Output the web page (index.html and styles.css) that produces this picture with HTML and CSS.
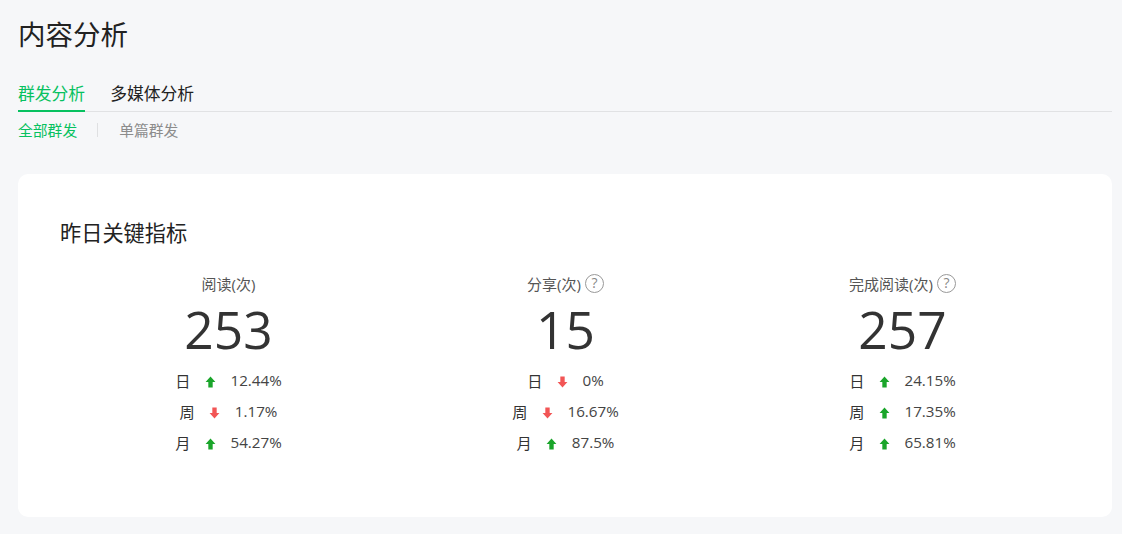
FILE: index.html
```html
<!DOCTYPE html>
<html lang="zh-CN">
<head>
    <meta charset="UTF-8">
    <title>内容分析</title>
    <link rel="stylesheet" href="styles.css">
</head>
<body>
    <svg class="defs" width="0" height="0">
        <symbol id="up" viewBox="0 0 10 11"><path d="M5 0.5 L9.5 5.5 H7 V10.5 H3 V5.5 H0.5 Z"/></symbol>
        <symbol id="down" viewBox="0 0 10 11"><path d="M5 10.5 L9.5 5.5 H7 V0.5 H3 V5.5 H0.5 Z"/></symbol>
    </svg>
    <div class="container">
        <h1 class="title">内容分析</h1>
        <div class="tabs">
            <a class="tab on">群发分析</a>
            <a class="tab">多媒体分析</a>
        </div>
        <div class="subtabs">
            <a class="subtab on">全部群发</a>
            <span class="sep"></span>
            <a class="subtab">单篇群发</a>
        </div>
        <div class="card">
            <h2 class="card-title">昨日关键指标</h2>
            <div class="stats">
                <div class="stat">
                    <div class="stat-name">阅读(次)</div>
                    <div class="stat-num">253</div>
                    <div class="row"><span class="label">日</span><svg class="arrow up"><use href="#up"/></svg><span>12.44%</span></div>
                    <div class="row"><span class="label">周</span><svg class="arrow down"><use href="#down"/></svg><span>1.17%</span></div>
                    <div class="row"><span class="label">月</span><svg class="arrow up"><use href="#up"/></svg><span>54.27%</span></div>
                </div>
                <div class="stat">
                    <div class="stat-name">分享(次)<span class="help">?</span></div>
                    <div class="stat-num">15</div>
                    <div class="row"><span class="label">日</span><svg class="arrow down"><use href="#down"/></svg><span>0%</span></div>
                    <div class="row"><span class="label">周</span><svg class="arrow down"><use href="#down"/></svg><span>16.67%</span></div>
                    <div class="row"><span class="label">月</span><svg class="arrow up"><use href="#up"/></svg><span>87.5%</span></div>
                </div>
                <div class="stat">
                    <div class="stat-name">完成阅读(次)<span class="help">?</span></div>
                    <div class="stat-num">257</div>
                    <div class="row"><span class="label">日</span><svg class="arrow up"><use href="#up"/></svg><span>24.15%</span></div>
                    <div class="row"><span class="label">周</span><svg class="arrow up"><use href="#up"/></svg><span>17.35%</span></div>
                    <div class="row"><span class="label">月</span><svg class="arrow up"><use href="#up"/></svg><span>65.81%</span></div>
                </div>
            </div>
        </div>
    </div>
</body>
</html>
```

FILE: styles.css
```css
* { margin: 0; padding: 0; box-sizing: border-box; }
html, body { height: 100%; overflow: hidden; }
body { background: #f6f7f9; color: #333; font-family: "Open Sans", "Noto Sans CJK SC", sans-serif; }
.defs { display: block; height: 0; }
.container { padding: 0 10px 0 18px; }
.title { height: 70px; line-height: 70px; font-size: 27.5px; font-weight: 400; color: #222; }
.tabs { display: flex; gap: 25px; height: 42px; border-bottom: 1px solid #e1e2e4; }
.tab { height: 42px; line-height: 48px; font-size: 16.8px; color: #222; }
.tab.on { color: #07c160; border-bottom: 2px solid #07c160; }
.subtabs { display: flex; align-items: center; height: 35px; font-size: 14.8px; }
.subtab { color: #8c8c8c; line-height: 34px; }
.subtab.on { color: #07c160; }
.sep { width: 1px; height: 14px; margin: 0 21px 0 20px; background: #dfe0e2; }
.card { height: 343px; margin-top: 27px; padding: 41px 41px 0 42px; background: #fff; border-radius: 10px; }
.card-title { height: 35px; line-height: 35px; font-size: 21.2px; font-weight: 400; color: #222; }
.stats { display: grid; grid-template-columns: repeat(3, 1fr); margin-top: 22px; }
.stat { display: flex; flex-direction: column; align-items: center; }
.stat-name { display: flex; align-items: center; height: 22px; font-size: 15px; color: #555; }
.help { width: 19px; height: 19px; margin: 1px 0 0 4px; border: 1.5px solid #999; border-radius: 50%; color: #888; font-size: 14px; line-height: 16px; text-align: center; }
.stat-num { height: 60px; margin-top: 5px; line-height: 60px; font-size: 51.5px; color: #333; }
.row { display: flex; align-items: center; gap: 14.5px; height: 31px; font-size: 15.2px; color: #444; }
.stat-num + .row { margin-top: 5px; }
.arrow { width: 11px; height: 12px; margin-top: 4px; }
.arrow.up { fill: #1aa52a; }
.arrow.down { fill: #f25555; }
.label { color: #333; }
```
